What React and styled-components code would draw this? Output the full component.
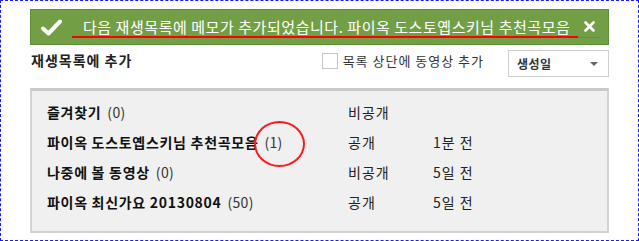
import React from 'react';
import styled, { createGlobalStyle } from 'styled-components';

const GlobalStyle = createGlobalStyle`
  body {
    margin: 0;
    font-family: "Noto Sans CJK KR", "Noto Sans", sans-serif;
    background: #fff;
  }
`;

const Frame = styled.div`
  box-sizing: border-box;
  width: 639px;
  height: 241px;
  border: 1px dashed #1a1aff;
  padding: 8px 29px 0 29px;
  position: relative;
`;

const Notice = styled.div`
  box-sizing: border-box;
  height: 36px;
  background: #729f46;
  border: 1px solid #5f8c38;
  display: flex;
  align-items: center;
  padding: 0 8px 0 10px;
  color: #fff;
  position: relative;
`;

const NoticeText = styled.span`
  flex: 1;
  margin-left: 21px;
  font-size: 15px;
  line-height: 20px;
  letter-spacing: 0.55px;
  position: relative;
`;

const Underline = styled.span`
  position: absolute;
  left: -11px;
  width: 506px;
  bottom: -1px;
  height: 2px;
  background: #ff0000;
`;

const Close = styled.button`
  width: 22px;
  height: 22px;
  border: 0;
  border-bottom: 1px solid #66913c;
  background: transparent;
  display: flex;
  align-items: center;
  justify-content: center;
  padding: 0;
`;

const Toolbar = styled.div`
  display: flex;
  align-items: flex-start;
  height: 43px;
  padding-top: 5px;
  box-sizing: border-box;
`;

const Title = styled.h2`
  flex: 1;
  margin: 0 0 0 1px;
  font-size: 14px;
  line-height: 20px;
  letter-spacing: 1px;
  font-weight: 700;
  color: #222;
`;

const CheckLabel = styled.label`
  display: flex;
  align-items: center;
  font-size: 13px;
  line-height: 16px;
  letter-spacing: 1px;
  color: #333;
  margin: 3px 24px 0 0;
`;

const Box = styled.span`
  box-sizing: border-box;
  width: 16px;
  height: 16px;
  border: 1px solid #c6c6c6;
  background: #fff;
  margin-right: 5px;
`;

const Select = styled.div`
  box-sizing: border-box;
  width: 101px;
  height: 27px;
  border: 1px solid #cfcfcf;
  display: flex;
  align-items: center;
  justify-content: space-between;
  padding: 0 10px 0 8px;
  font-size: 12px;
  font-weight: 700;
  letter-spacing: 0.5px;
  color: #333;
`;

const Arrow = styled.span`
  width: 0;
  height: 0;
  border-left: 4px solid transparent;
  border-right: 4px solid transparent;
  border-top: 4px solid #666;
`;

const Panel = styled.div`
  box-sizing: border-box;
  height: 145px;
  background: #f0f0f0;
  border: 2px solid #d2d2d2;
  border-top: 3px solid #c8c8c8;
  padding: 6px 0 0 15px;
  position: relative;
`;

const Row = styled.div`
  display: grid;
  grid-template-columns: 301px 85px auto;
  align-items: center;
  height: 30px;
  font-size: 14px;
  line-height: 20px;
  letter-spacing: 0.7px;
  color: #222;
`;

const Name = styled.span`
  font-weight: 700;
  color: #111;
`;

const Count = styled.span`
  font-weight: 400;
  color: #333;
  letter-spacing: 0.3px;
  margin-left: 6px;
`;

const Cell = styled.span`
  color: #222;
  letter-spacing: 1px;
`;

const Circle = styled.span`
  position: absolute;
  left: 222px;
  top: 30px;
  width: 47px;
  height: 42px;
  border: 2px solid #ff1a1a;
  border-radius: 50%;
`;

const rows = [
  { name: '즐겨찾기', count: 0, privacy: '비공개', time: '' },
  { name: '파이옥 도스토옙스키님 추천곡모음', count: 1, privacy: '공개', time: '1분 전' },
  { name: '나중에 볼 동영상', count: 0, privacy: '비공개', time: '5일 전' },
  { name: '파이옥 최신가요 20130804', count: 50, privacy: '공개', time: '5일 전' },
];

export default function App() {
  return (
    <>
      <GlobalStyle />
      <Frame>
        <Notice>
          <svg width="21" height="17" viewBox="0 0 21 17">
            <path d="M2 9.5 L7.5 14.5 L19 2.5" fill="none" stroke="#fff" strokeWidth="4" strokeLinecap="round" strokeLinejoin="round" />
          </svg>
          <NoticeText>
            다음 재생목록에 메모가 추가되었습니다. 파이옥 도스토옙스키님 추천곡모음
            <Underline />
          </NoticeText>
          <Close aria-label="닫기">
            <svg width="11" height="11" viewBox="0 0 11 11">
              <path d="M1.5 1.5 L9.5 9.5 M9.5 1.5 L1.5 9.5" stroke="#fff" strokeWidth="2.6" strokeLinecap="round" />
            </svg>
          </Close>
        </Notice>
        <Toolbar>
          <Title>재생목록에 추가</Title>
          <CheckLabel>
            <Box />
            목록 상단에 동영상 추가
          </CheckLabel>
          <Select>
            생성일
            <Arrow />
          </Select>
        </Toolbar>
        <Panel>
          {rows.map(r => (
            <Row key={r.name}>
              <span>
                <Name>{r.name}</Name>
                <Count>({r.count})</Count>
              </span>
              <Cell>{r.privacy}</Cell>
              <Cell>{r.time}</Cell>
            </Row>
          ))}
          <Circle />
        </Panel>
      </Frame>
    </>
  );
}
